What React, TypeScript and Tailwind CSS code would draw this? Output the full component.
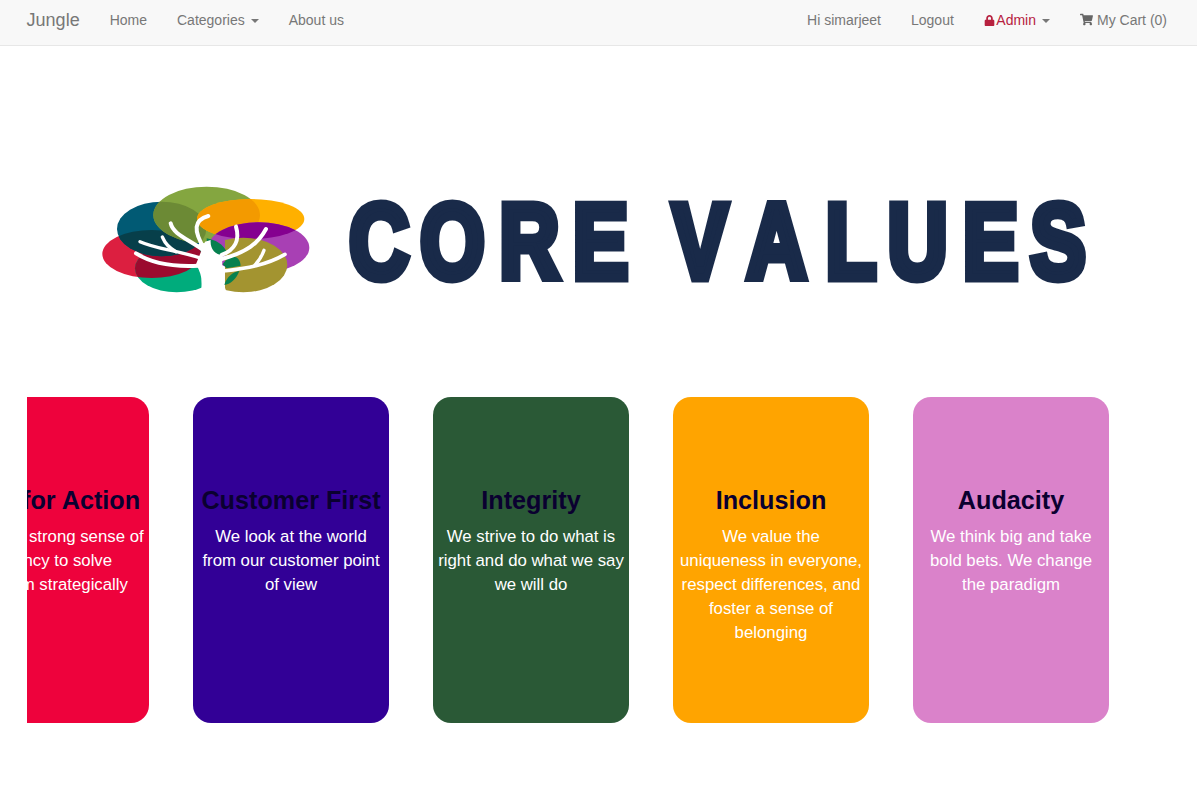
import React from "react";
import { FaLock, FaShoppingCart } from "react-icons/fa";

const values = [
  {
    title: "Bias for Action",
    text: ["We have strong sense of", "urgency to solve", "problem strategically"],
    bg: "bg-[#ee023c]",
  },
  { title: "Customer First", text: ["We look at the world from our customer point of view"], bg: "bg-[#320096]" },
  { title: "Integrity", text: ["We strive to do what is right and do what we say we will do"], bg: "bg-[#2a5936]" },
  {
    title: "Inclusion",
    text: ["We value the uniqueness in everyone, respect differences, and foster a sense of belonging"],
    bg: "bg-[#ffa400]",
  },
  { title: "Audacity", text: ["We think big and take bold bets. We change the paradigm"], bg: "bg-[#da82ca]" },
];

const Caret = () => (
  <span className="inline-block ml-[6px] align-middle w-0 h-0 border-x-4 border-x-transparent border-t-4 border-t-[#777]" />
);

const NavLink = ({ children, className = "" }: { children: React.ReactNode; className?: string }) => (
  <a className={`block px-[15px] py-[10px] leading-[20px] text-[14px] text-[#777] whitespace-nowrap ${className}`}>
    {children}
  </a>
);

const Banner = () => (
  <svg viewBox="0 46 1197 351" className="block w-[1197px] h-[351px] blur-[0.7px]">
    <defs>
      <clipPath id="red"><ellipse cx="185" cy="237" rx="148" ry="72" /></clipPath>
      <clipPath id="teal"><ellipse cx="215" cy="162" rx="134" ry="82" /></clipPath>
      <clipPath id="olive"><ellipse cx="350" cy="120" rx="160" ry="85" /></clipPath>
      <clipPath id="orange"><ellipse cx="482" cy="132" rx="161" ry="60" /></clipPath>
      <clipPath id="left"><rect x="0" y="0" width="335" height="400" /></clipPath>
      <clipPath id="right"><rect x="405" y="0" width="300" height="400" /></clipPath>
    </defs>
    <g transform="translate(90 175) scale(0.3333)">
      <ellipse cx="185" cy="237" rx="148" ry="72" fill="#dc1f40" />
      <g clipPath="url(#left)">
        <ellipse cx="260" cy="280" rx="125" ry="72" fill="#00ac7c" />
        <g clipPath="url(#red)">
          <ellipse cx="260" cy="280" rx="125" ry="72" fill="#9b0a2e" />
        </g>
      </g>
      <ellipse cx="215" cy="162" rx="134" ry="82" fill="#015a74" />
      <g clipPath="url(#red)">
        <ellipse cx="215" cy="162" rx="134" ry="82" fill="#073f4a" />
      </g>
      <ellipse cx="350" cy="120" rx="160" ry="85" fill="#84a640" />
      <g clipPath="url(#teal)">
        <ellipse cx="350" cy="120" rx="160" ry="85" fill="#6c8a35" />
      </g>
      <ellipse cx="482" cy="132" rx="161" ry="60" fill="#ffb000" />
      <g clipPath="url(#olive)">
        <ellipse cx="482" cy="132" rx="161" ry="60" fill="#f39a00" />
      </g>
      <ellipse cx="506" cy="218" rx="152" ry="76" fill="#a840b4" />
      <g clipPath="url(#orange)">
        <ellipse cx="506" cy="218" rx="152" ry="76" fill="#850090" />
      </g>
      <g clipPath="url(#right)">
        <ellipse cx="460" cy="270" rx="132" ry="82" fill="#a39430" />
      </g>
      <path d="M350 190 C375 195 400 205 412 235 L385 245 C360 245 350 220 350 190 Z M398 268 C420 235 450 240 452 272 L410 280 Z M403 330 C410 305 430 290 448 288 C440 312 420 328 403 330 Z" fill="#07804f" />
      <path d="M332 356 C340 320 334 295 318 268 L345 200 L362 195 C360 222 375 240 398 240 C396 272 392 312 412 356 Z" fill="#fff" />
      <g fill="none" stroke="#fff" strokeLinecap="round">
        <path d="M150 200 C200 222 250 224 335 250" strokeWidth="10" />
        <path d="M138 235 C190 268 250 276 325 272" strokeWidth="12" />
        <path d="M217 186 C225 205 235 218 258 230" strokeWidth="10" />
        <path d="M242 145 C250 178 290 190 340 225" strokeWidth="12" />
        <path d="M355 123 C312 135 308 165 345 225" strokeWidth="12" />
        <path d="M438 155 C450 195 435 225 395 240" strokeWidth="12" />
        <path d="M528 162 C505 205 470 232 395 252" strokeWidth="12" />
        <path d="M585 238 C530 270 470 280 400 288" strokeWidth="11" />
        <path d="M522 226 C515 245 510 255 495 270" strokeWidth="10" />
      </g>
    </g>
    <text
      transform="scale(0.78 1)"
      x="485.9 580.1 678.8 769.9 833.3 897.4 995.5 1091 1176.3 1269.9 1356.4"
      y="278.5"
      textAnchor="middle"
      fontFamily="'Liberation Sans', Arial, sans-serif"
      fontWeight="700"
      fontSize="106"
      fill="#192a49"
      stroke="#192a49"
      strokeWidth="9"
      strokeLinejoin="miter"
    >
      CORE VALUES
    </text>
  </svg>
);

export default function App() {
  return (
    <div className="min-h-[786px] bg-white font-['Liberation_Sans',Arial,sans-serif] overflow-hidden">
      <nav className="flex justify-between h-[46px] bg-[#f8f8f8] border-b border-[#e7e7e7] pl-[11.6px] pr-[15px]">
        <div className="flex">
          <a className="block px-[15px] py-[10px] text-[18px] leading-[20px] text-[#777]">Jungle</a>
          <NavLink>Home</NavLink>
          <NavLink>
            Categories
            <Caret />
          </NavLink>
          <NavLink>About us</NavLink>
        </div>
        <div className="flex">
          <NavLink>Hi simarjeet</NavLink>
          <NavLink>Logout</NavLink>
          <NavLink className="!text-[#b7213f]">
            <FaLock className="inline-block text-[11px] mr-[1.5px] align-[-0.5px]" />
            Admin
            <Caret />
          </NavLink>
          <NavLink>
            <FaShoppingCart className="inline-block text-[13px] mr-[4px] align-[-1px] text-[#666]" />
            My Cart (0)
          </NavLink>
        </div>
      </nav>

      <Banner />

      <div className="ml-[27px] overflow-hidden">
        <div className="flex gap-[44px] -ml-[74px]">
          {values.map((v) => (
            <div key={v.title} className={`w-[196px] h-[326px] shrink-0 rounded-[18px] px-[5px] pt-[85px] text-center ${v.bg}`}>
              <h2 className="text-[25.2px] leading-[36px] font-bold text-[#0a0030] whitespace-nowrap">{v.title}</h2>
              <div className="mt-[7px] text-[16.8px] leading-[24px] text-white">
                {v.text.map((t) => (
                  <p key={t} className="m-0">{t}</p>
                ))}
              </div>
            </div>
          ))}
        </div>
      </div>
    </div>
  );
}
